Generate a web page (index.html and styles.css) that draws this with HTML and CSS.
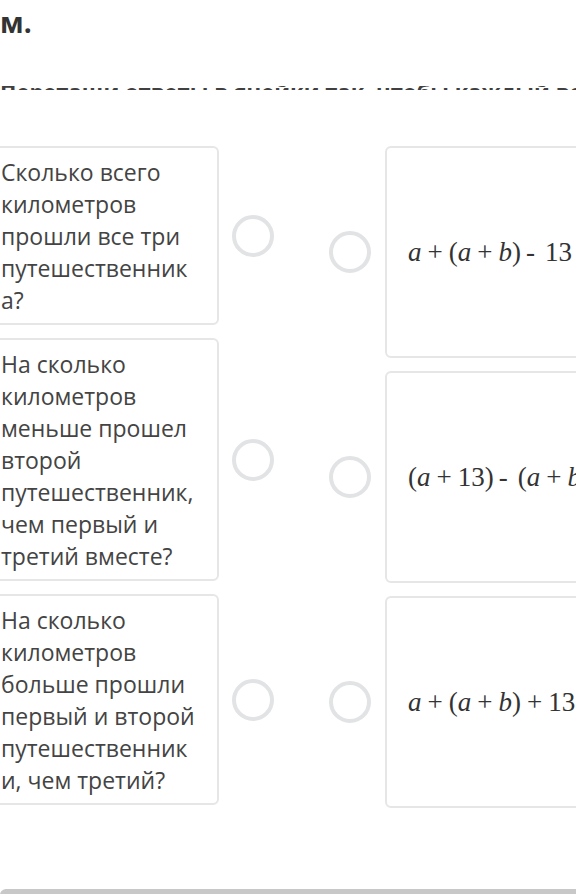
FILE: index.html
```html
<!DOCTYPE html>
<html lang="ru">
<head>
<meta charset="utf-8">
<title>Соотнеси вопросы</title>
<link rel="stylesheet" href="styles.css">
</head>
<body>
<div class="page">
  <h1 class="title">
    <span class="title-line first">Соотнеси каждый вопрос с выражением, которое подходит к задача</span>
    <span class="title-line">м.</span>
  </h1>
  <div class="strip"><div class="strip-text">Перетащи ответы в ячейки так, чтобы каждый вопрос совпал с ответом. Перетащи ответы</div></div>

  <div class="board">
    <div class="col col-q">
      <div class="item">
        <div class="card q">Сколько всего километров прошли все три путешественника?</div>
        <span class="radio"></span>
      </div>
      <div class="item">
        <div class="card q">На сколько километров меньше прошел второй путешественник, чем первый и третий вместе?</div>
        <span class="radio"></span>
      </div>
      <div class="item">
        <div class="card q">На сколько километров больше прошли первый и второй путешественники, чем третий?</div>
        <span class="radio"></span>
      </div>
    </div>
    <div class="col col-a">
      <div class="item">
        <span class="radio"></span>
        <div class="card a"><span class="math"><i>a</i><span class="op">+</span>(<i>a</i><span class="op">+</span><i>b</i>)<span class="op minus">-</span>13</span></div>
      </div>
      <div class="item">
        <span class="radio"></span>
        <div class="card a"><span class="math">(<i>a</i><span class="op">+</span>13)<span class="op minus">-</span>(<i>a</i><span class="op">+</span><i>b</i>)</span></div>
      </div>
      <div class="item">
        <span class="radio"></span>
        <div class="card a"><span class="math"><i>a</i><span class="op">+</span>(<i>a</i><span class="op">+</span><i>b</i>)<span class="op">+</span>13</span></div>
      </div>
    </div>
  </div>
  <div class="footer"></div>
</div>
</body>
</html>
```

FILE: styles.css
```css
html, body {
  margin: 0;
  padding: 0;
  overflow: hidden;
  background: #ffffff;
}

.page {
  width: 576px;
  height: 894px;
  overflow: hidden;
  font-family: "Open Sans", "Noto Sans", sans-serif;
}

.title {
  margin: -36px 0 0 0;
  font-size: 28px;
  font-weight: 700;
  line-height: 36px;
  color: #333333;
}

.title-line {
  display: block;
  white-space: nowrap;
}

.title-line.first {
  margin-bottom: 4px;
}

.strip {
  margin-top: 46px;
  height: 4px;
  overflow: hidden;
}

.strip-text {
  margin-top: -10px;
  font-size: 22px;
  font-weight: 700;
  line-height: 30px;
  color: #404040;
  white-space: nowrap;
}

.board {
  display: flex;
  gap: 55px;
  margin-top: 56px;
  margin-left: -13px;
  width: 620px;
}

.col {
  display: flex;
  flex-direction: column;
  gap: 13px;
}

.item {
  display: flex;
  align-items: center;
}

.col-q .item {
  gap: 13px;
}

.col-a .item {
  gap: 14px;
}

.card {
  box-sizing: border-box;
  border: 2px solid #e6e6e6;
  border-radius: 6px;
  background: #ffffff;
}

.q {
  width: 232px;
  padding: 8px 21px 7px 12px;
  font-size: 23px;
  line-height: 32px;
  color: #444444;
  overflow-wrap: break-word;
}

.a {
  width: 260px;
  height: 212px;
  padding-left: 21px;
  display: flex;
  align-items: center;
}

.radio {
  flex: none;
  box-sizing: border-box;
  width: 42px;
  height: 42px;
  border: 4px solid #e2e3e5;
  border-radius: 50%;
}

.math {
  font-family: "Liberation Serif", "DejaVu Serif", serif;
  font-size: 27px;
  color: #333333;
  white-space: nowrap;
}

.math i {
  font-style: italic;
}

.op {
  margin: 0 6px;
}

.minus {
  margin: 0 10px 0 5px;
}

.footer {
  margin-top: 81px;
  height: 10px;
  background: #c8c8c8;
  border-radius: 6px 0 0 0;
}
```
